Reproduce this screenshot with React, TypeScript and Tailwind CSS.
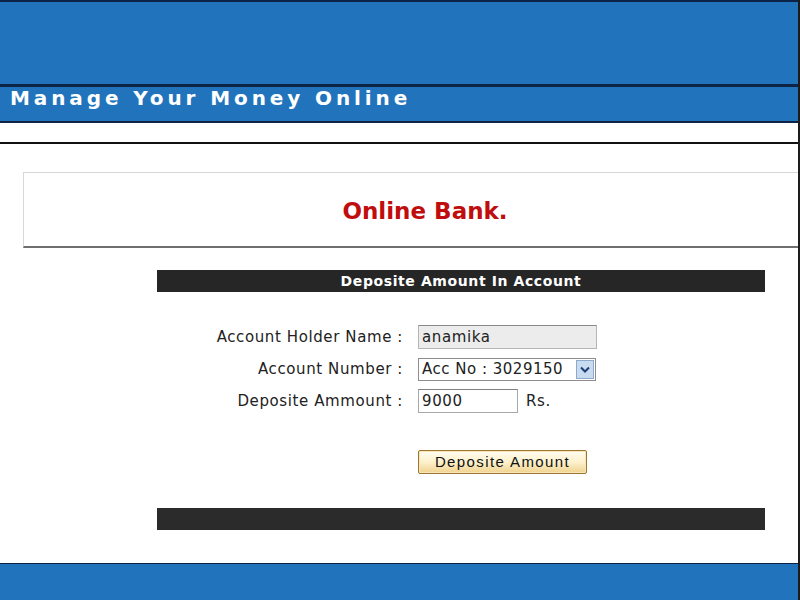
import React from 'react';

const verdana = { fontFamily: '"DejaVu Sans", Verdana, sans-serif' };

function Row({ label, children }: { label: string; children: React.ReactNode }) {
  return (
    <div className="flex items-center h-[24px]">
      <div className="w-[247px] text-right text-[15px] tracking-[0.6px] text-[#222] pr-[1px]">{label}</div>
      <div className="ml-[14px] flex items-center">{children}</div>
    </div>
  );
}

export default function App() {
  return (
    <div
      className="w-[800px] h-[600px] flex flex-col bg-white overflow-hidden border-r-2 border-[#1c1c1c]"
      style={verdana}
    >
      {/* top banner */}
      <div className="h-[84px] shrink-0 bg-[#2174bc] border-t-2 border-[#0b2448]" />
      <div className="h-[3px] shrink-0 bg-[#0d2444]" />
      <div className="h-[34px] shrink-0 bg-[#2174bc] flex items-start pl-[10px]">
        <span className="text-white font-bold text-[20px] leading-[22px] tracking-[3.9px]">Manage Your Money Online</span>
      </div>
      <div className="h-[2px] shrink-0 bg-[#0d2444]" />
      <div className="h-[19px] shrink-0 bg-white" />
      <div className="h-[2px] shrink-0 bg-[#111]" />

      {/* body */}
      <div className="flex-1 flex flex-col">
        <div className="mt-[28px] ml-[23px] h-[76px] border-t border-l border-[#d8d8d8] border-b-2 border-b-[#6f6f6f] flex items-center justify-center pl-[28px]">
          <span className="text-[#c00d0d] font-bold text-[23px] pt-[3px]">Online Bank.</span>
        </div>

        <div className="mt-[22px] ml-[157px] w-[608px] h-[22px] bg-[#262626] flex items-center justify-center">
          <span className="text-white font-bold text-[14px] tracking-[0.6px]">Deposite Amount In Account</span>
        </div>

        <div className="mt-[33px] ml-[157px] flex flex-col gap-[8px]">
          <Row label="Account Holder Name :">
            <div className="w-[179px] h-[24px] bg-[#ececec] border border-[#b5b5b5] border-t-[#8a8a8a] flex items-center px-[3px] text-[15px] tracking-[0.6px] text-[#222]">
              anamika
            </div>
          </Row>
          <Row label="Account Number :">
            <div className="w-[178px] h-[23px] bg-white border border-[#8d8d8d] flex items-center justify-between pl-[3px] pr-[1px] text-[15px] tracking-[0.5px] text-[#222]">
              <span>Acc No : 3029150</span>
              <span className="w-[18px] h-[19px] bg-[#c9dbf1] border border-[#8fa9cc] flex items-center justify-center">
                <svg width="10" height="7" viewBox="0 0 10 7">
                  <path d="M1 1.5 L5 5.5 L9 1.5" fill="none" stroke="#1c3f78" strokeWidth="2" />
                </svg>
              </span>
            </div>
          </Row>
          <Row label="Deposite Ammount :">
            <div className="w-[100px] h-[24px] bg-white border border-[#a8a8a8] border-t-[#808080] flex items-center px-[3px] text-[15px] tracking-[0.6px] text-[#222]">
              9000
            </div>
            <span className="ml-[8px] text-[15px] tracking-[0.6px] text-[#222]">Rs.</span>
          </Row>
        </div>

        <div className="mt-[37px] ml-[418px]">
          <button
            className="w-[169px] h-[24px] rounded-[2px] border border-[#9c7630] bg-gradient-to-b from-[#fffdf0] via-[#fdf1cc] to-[#efd28e] text-[15px] tracking-[1.4px] text-[#111] shadow-[inset_0_0_0_1px_#f7e7b8]"
            style={{ fontFamily: '"Liberation Sans", Arial, sans-serif' }}
          >
            Deposite Amount
          </button>
        </div>

        <div className="mt-[34px] ml-[157px] w-[608px] h-[22px] bg-[#2b2b2b]" />
      </div>

      {/* bottom banner */}
      <div className="h-[1px] shrink-0 bg-[#0d2444]" />
      <div className="h-[36px] shrink-0 bg-[#2174bc]" />
    </div>
  );
}
